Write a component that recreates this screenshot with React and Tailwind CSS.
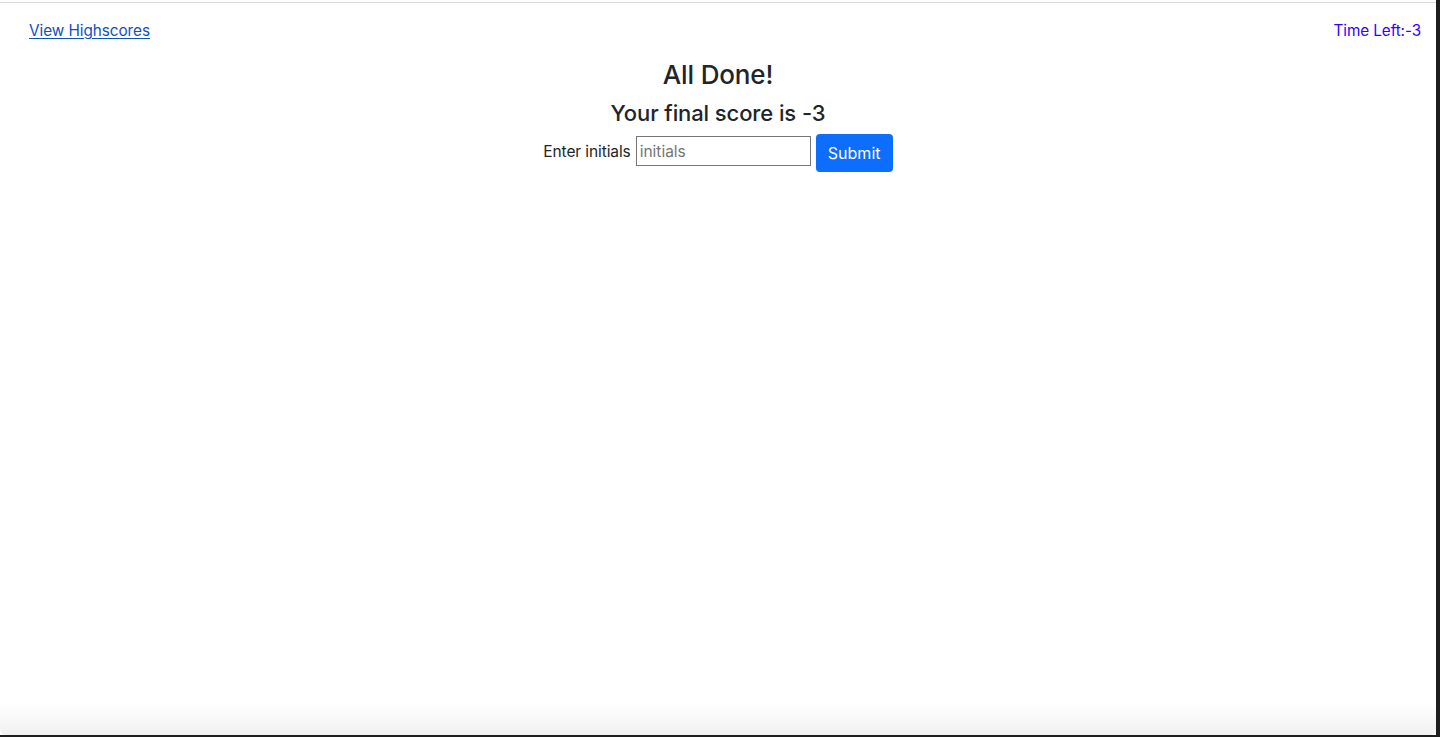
export default function App() {
  return (
    <div className="flex h-[737px] w-full overflow-hidden bg-[#1e1e1e]" style={{ fontFamily: 'Inter, "Liberation Sans", sans-serif' }}>
      <div className="relative flex h-[735px] w-[1436px] flex-col bg-white pt-[2px]">
        <div className="border-t border-[#d9d9de]" />
        <header className="mt-[16px] flex items-center justify-between pl-[29px] pr-[15px] text-[15.3px] leading-[24px]">
          <a href="#" className="tracking-[-0.05px] text-[#0f4fc4] underline underline-offset-2">View Highscores</a>
          <span className="tracking-[-0.1px] text-[#3300ff]">Time Left:-3</span>
        </header>
        <main className="mt-[15px] flex flex-col items-center text-[#212529]">
          <h3 className="mb-2 text-[26px] font-medium leading-[33px] tracking-[-0.15px]">All Done!</h3>
          <h4 className="mb-[6px] text-[22px] font-medium leading-[28.8px] tracking-[-0.1px]">Your final score is -3</h4>
          <div className="flex items-start text-[15.5px]">
            <label className="mr-[5px] mt-[6px] leading-[24px] tracking-[-0.1px]">Enter initials</label>
            <input
              placeholder="initials"
              className="mt-[2px] h-[30px] w-[175px] border border-[#767676] px-[3px] pt-[1px] text-[15.5px] text-black outline-none placeholder:text-[#757575]"
            />
            <button className="ml-[5px] h-[38px] w-[77px] rounded-[4px] bg-[#0d6efd] text-[16px] text-white">Submit</button>
          </div>
        </main>
        <div className="pointer-events-none absolute bottom-0 left-0 right-0 h-[32px] rounded-b-[6px] bg-gradient-to-b from-white to-[#f1f1f1]" />
      </div>
      <div className="flex-1 bg-[#1e1e1e]" />
    </div>
  );
}
